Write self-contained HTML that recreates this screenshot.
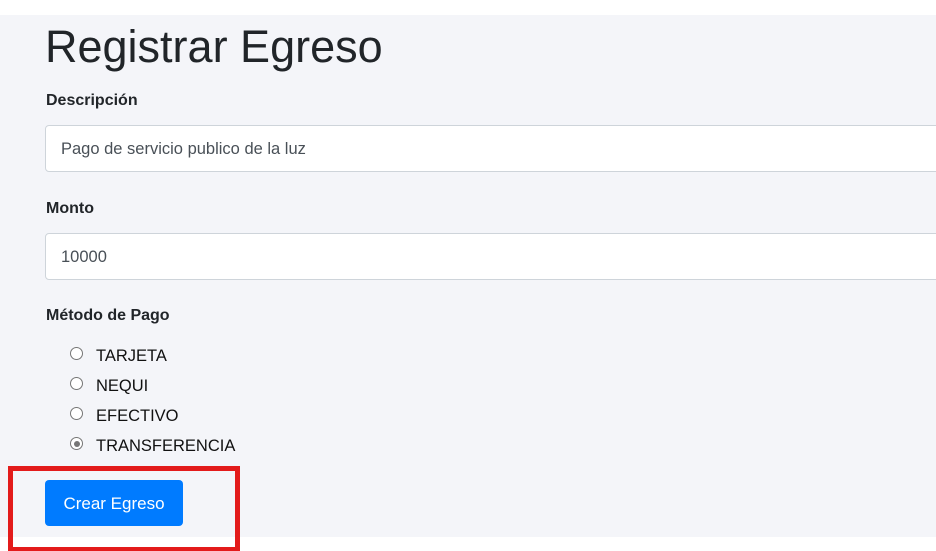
<!DOCTYPE html>
<html><head><style>
body{margin:0;width:936px;height:551px;background:#fff;font-family:"Liberation Sans",sans-serif;position:relative;overflow:hidden;color:#212529}
.bg{position:absolute;left:0;top:15px;width:936px;height:522px;background:#f4f5f9}
.a{position:absolute;white-space:nowrap}
h1{position:absolute;left:45px;top:20px;margin:0;font-weight:400;font-size:45px;line-height:54px;letter-spacing:0}
.lbl{font-weight:bold;font-size:16px}
.inp{position:absolute;left:45px;width:900px;height:47px;background:#fff;border:1px solid #ced4da;border-radius:4px;box-sizing:border-box}
.inp span{position:absolute;left:15px;top:14px;font-size:16.5px;color:#495057}
.r{position:absolute;left:70px;width:13px;height:13px;border:1px solid #767676;border-radius:50%;background:#fff;box-sizing:border-box}
.rt{position:absolute;left:96px;font-size:16.5px;color:#111}
.btn{position:absolute;left:45px;top:480px;width:138px;height:46px;background:#007bff;border-radius:4px;color:#fff;font-size:17px;text-align:center;line-height:48px}
.red{position:absolute;left:8px;top:466px;width:232px;height:85px;border:5px solid #e31b1b;border-bottom-width:4px;box-sizing:border-box}
</style></head><body>
<div class="bg"></div>
<h1>Registrar Egreso</h1>
<div class="a lbl" style="left:46px;top:92px">Descripción</div>
<div class="inp" style="top:125px"><span>Pago de servicio publico de la luz</span></div>
<div class="a lbl" style="left:46px;top:200px">Monto</div>
<div class="inp" style="top:233px"><span>10000</span></div>
<div class="a lbl" style="left:46px;top:307px">Método de Pago</div>
<div class="r" style="top:347px"></div><div class="rt" style="top:347px">TARJETA</div>
<div class="r" style="top:377px"></div><div class="rt" style="top:377px">NEQUI</div>
<div class="r" style="top:407px"></div><div class="rt" style="top:407px">EFECTIVO</div>
<div class="r" style="top:437px"><div style="position:absolute;left:2.5px;top:2.5px;width:6px;height:6px;border-radius:50%;background:#767676"></div></div><div class="rt" style="top:437px">TRANSFERENCIA</div>
<div class="btn">Crear Egreso</div>
<div class="red"></div>
</body></html>
